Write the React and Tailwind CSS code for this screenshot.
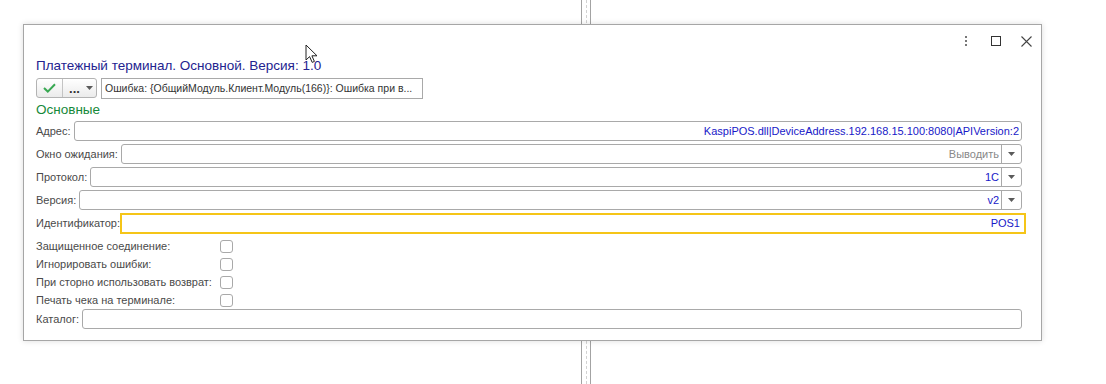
import React from 'react';

const labelCls = "text-[11px] text-[#4a4a4a] whitespace-nowrap leading-none";

const DropArrow = () => (
  <svg width="7" height="4" viewBox="0 0 7 4"><path d="M0 0h7L3.5 4z" fill="#5a5a5a" /></svg>
);

const Field = ({ label, value, valueCls = "text-[#1818c8]", dropdown }) => (
  <div className="flex h-[20px] items-center gap-[3px]">
    <span className={labelCls}>{label}</span>
    <div className="flex h-full flex-1 rounded-[3px] border border-[#a9a9a9] bg-white">
      <div className={`flex flex-1 items-center justify-end pr-[2px] text-[11px] ${valueCls}`}>{value}</div>
      {dropdown && (
        <div className="flex w-[20px] items-center justify-center border-l border-[#a9a9a9]">
          <DropArrow />
        </div>
      )}
    </div>
  </div>
);

const CheckRow = ({ label }) => (
  <div className="flex h-[18px] items-center">
    <span className={`${labelCls} w-[184px]`}>{label}</span>
    <span className="h-[13px] w-[13px] rounded-[3px] border border-[#a9a9a9] bg-white" />
  </div>
);

const App = () => {
  return (
    <div className="relative h-[384px] w-[1106px] overflow-hidden bg-white font-['Liberation_Sans',Arial,sans-serif]">
      {/* splitter lines behind the dialog */}
      <div className="absolute left-[581px] top-0 flex h-full w-[10px] justify-center border-x border-[#a3a3a3]">
        <div className="h-full border-l border-dashed border-[#d2d2d2]" />
      </div>

      <div className="relative ml-[23px] mt-[24px] flex h-[317px] w-[1019px] flex-col border border-[#a6a6a6] bg-white pl-[12px] pr-[19px] shadow-[0_0_6px_rgba(0,0,0,0.14)]">
        {/* window controls */}
        <div className="flex h-[32px] items-center justify-end gap-[20px]">
          <div className="flex flex-col gap-[2px]">
            <span className="h-[2px] w-[2px] bg-[#777]" />
            <span className="h-[2px] w-[2px] bg-[#777]" />
            <span className="h-[2px] w-[2px] bg-[#777]" />
          </div>
          <svg width="10" height="10" viewBox="0 0 10 10" className="ml-[4px]">
            <rect x="0.5" y="0.5" width="9" height="9" fill="none" stroke="#333" />
          </svg>
          <svg width="11" height="11" viewBox="0 0 11 11" className="mr-[-10px]">
            <path d="M0.5 0.5l10 10M10.5 0.5l-10 10" stroke="#444" strokeWidth="1.1" />
          </svg>
        </div>

        {/* title */}
        <div className="flex h-[18px] items-center text-[13.5px] text-[#23238f]">
          Платежный терминал. Основной. Версия: 1.0
        </div>

        {/* toolbar */}
        <div className="mt-[3px] flex h-[21px] items-start gap-[4px]">
          <div className="flex h-[20px] w-[61px] rounded-[3px] border border-[#b3b3b3] bg-gradient-to-b from-white to-[#ebebeb]">
            <div className="flex w-[26px] items-center justify-center border-r border-[#c4c4c4]">
              <svg width="13" height="10" viewBox="0 0 13 10">
                <path d="M1 5l3.8 3.6L12 1.2" fill="none" stroke="#38a852" strokeWidth="2" />
              </svg>
            </div>
            <div className="flex flex-1 items-center justify-center gap-[6px] pl-[3px]">
              <span className="text-[13px] font-bold leading-none text-[#333]">...</span>
              <DropArrow />
            </div>
          </div>
          <div className="flex h-[21px] w-[322px] items-center overflow-hidden whitespace-nowrap border border-[#a9a9a9] bg-white pl-[3px] text-[10.5px] text-[#333]">
            Ошибка: {'{'}ОбщийМодуль.Клиент.Модуль(166){'}'}: Ошибка при в...
          </div>
        </div>

        <div className="mt-[3px] flex h-[16px] items-center text-[13.5px] text-[#16893a]">Основные</div>

        {/* fields */}
        <div className="mt-[3px] flex flex-col gap-[3px]">
          <Field label="Адрес:" value="KaspiPOS.dll|DeviceAddress.192.168.15.100:8080|APIVersion:2" />
          <Field label="Окно ожидания:" value="Выводить" valueCls="text-[#888]" dropdown />
          <Field label="Протокол:" value="1С" dropdown />
          <Field label="Версия:" value="v2" dropdown />
          <div className="flex h-[21px] items-center">
            <span className={labelCls}>Идентификатор:</span>
            <div className="mr-[-4px] flex h-full flex-1 items-center justify-end border-2 border-[#f5c518] bg-white pr-[4px] text-[11px] text-[#1818c8]">
              POS1
            </div>
          </div>
        </div>

        <div className="mt-[3px] flex flex-col">
          <CheckRow label="Защищенное соединение:" />
          <CheckRow label="Игнорировать ошибки:" />
          <CheckRow label="При сторно использовать возврат:" />
          <CheckRow label="Печать чека на терминале:" />
        </div>

        <Field label="Каталог:" value="" />

        {/* mouse pointer */}
        <svg width="14" height="20" viewBox="0 0 14 20" className="absolute left-[281px] top-[19px]">
          <path d="M1 1v15l3.6-3.4 2.6 5.8 2.2-1-2.5-5.6H12z" fill="#fff" stroke="#222" strokeWidth="1" strokeLinejoin="round" />
        </svg>
      </div>
    </div>
  );
};

export default App;
